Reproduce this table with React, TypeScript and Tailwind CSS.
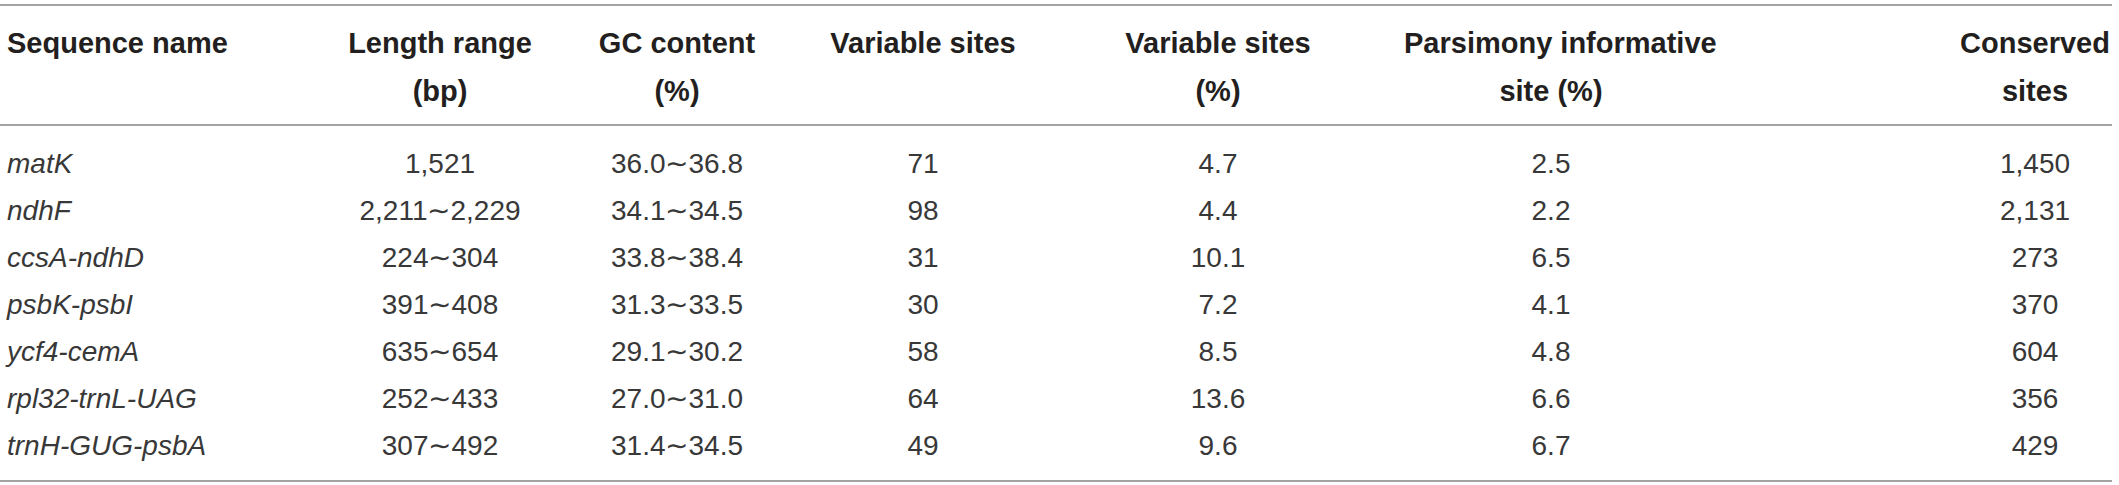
const rows = [
  ["matK", "1,521", "36.0∼36.8", "71", "4.7", "2.5", "1,450"],
  ["ndhF", "2,211∼2,229", "34.1∼34.5", "98", "4.4", "2.2", "2,131"],
  ["ccsA-ndhD", "224∼304", "33.8∼38.4", "31", "10.1", "6.5", "273"],
  ["psbK-psbI", "391∼408", "31.3∼33.5", "30", "7.2", "4.1", "370"],
  ["ycf4-cemA", "635∼654", "29.1∼30.2", "58", "8.5", "4.8", "604"],
  ["rpl32-trnL-UAG", "252∼433", "27.0∼31.0", "64", "13.6", "6.6", "356"],
  ["trnH-GUG-psbA", "307∼492", "31.4∼34.5", "49", "9.6", "6.7", "429"],
];

const cols = "grid grid-cols-[340px_200px_274px_218px_372px_294px_414px] whitespace-nowrap";

export default function App() {
  return (
    <div className="w-[2119px] h-[485px] bg-white pt-[4px] font-['Liberation_Sans',Arial,sans-serif]">
      <div className="w-[2112px] border-t-2 border-b-2 border-[#a3a3a3]">
        {/* Header */}
        <div className={`${cols} border-b-2 border-[#a3a3a3] pt-[13px] pb-[9px] text-[29px] leading-[48px] font-bold text-[#231f20]`}>
          <div className="pl-[7px]">Sequence name</div>
          <div className="text-center">Length range<br />(bp)</div>
          <div className="text-center">GC content<br />(%)</div>
          <div className="text-center">Variable sites</div>
          <div className="text-center">Variable sites<br />(%)</div>
          <div className="text-center">Parsimony informative<br />site (%)</div>
          <div className="text-center pl-[260px]">Conserved<br />sites</div>
        </div>

        {/* Body */}
        <div className="pt-[14px] pb-[11px] text-[28px] leading-[47px] text-[#383838]">
          {rows.map((r) => (
            <div key={r[0]} className={cols}>
              <div className="pl-[7px] italic">{r[0]}</div>
              {r.slice(1, 6).map((c, i) => (
                <div key={i} className="text-center">{c}</div>
              ))}
              <div className="text-center pl-[260px]">{r[6]}</div>
            </div>
          ))}
        </div>
      </div>
    </div>
  );
}
